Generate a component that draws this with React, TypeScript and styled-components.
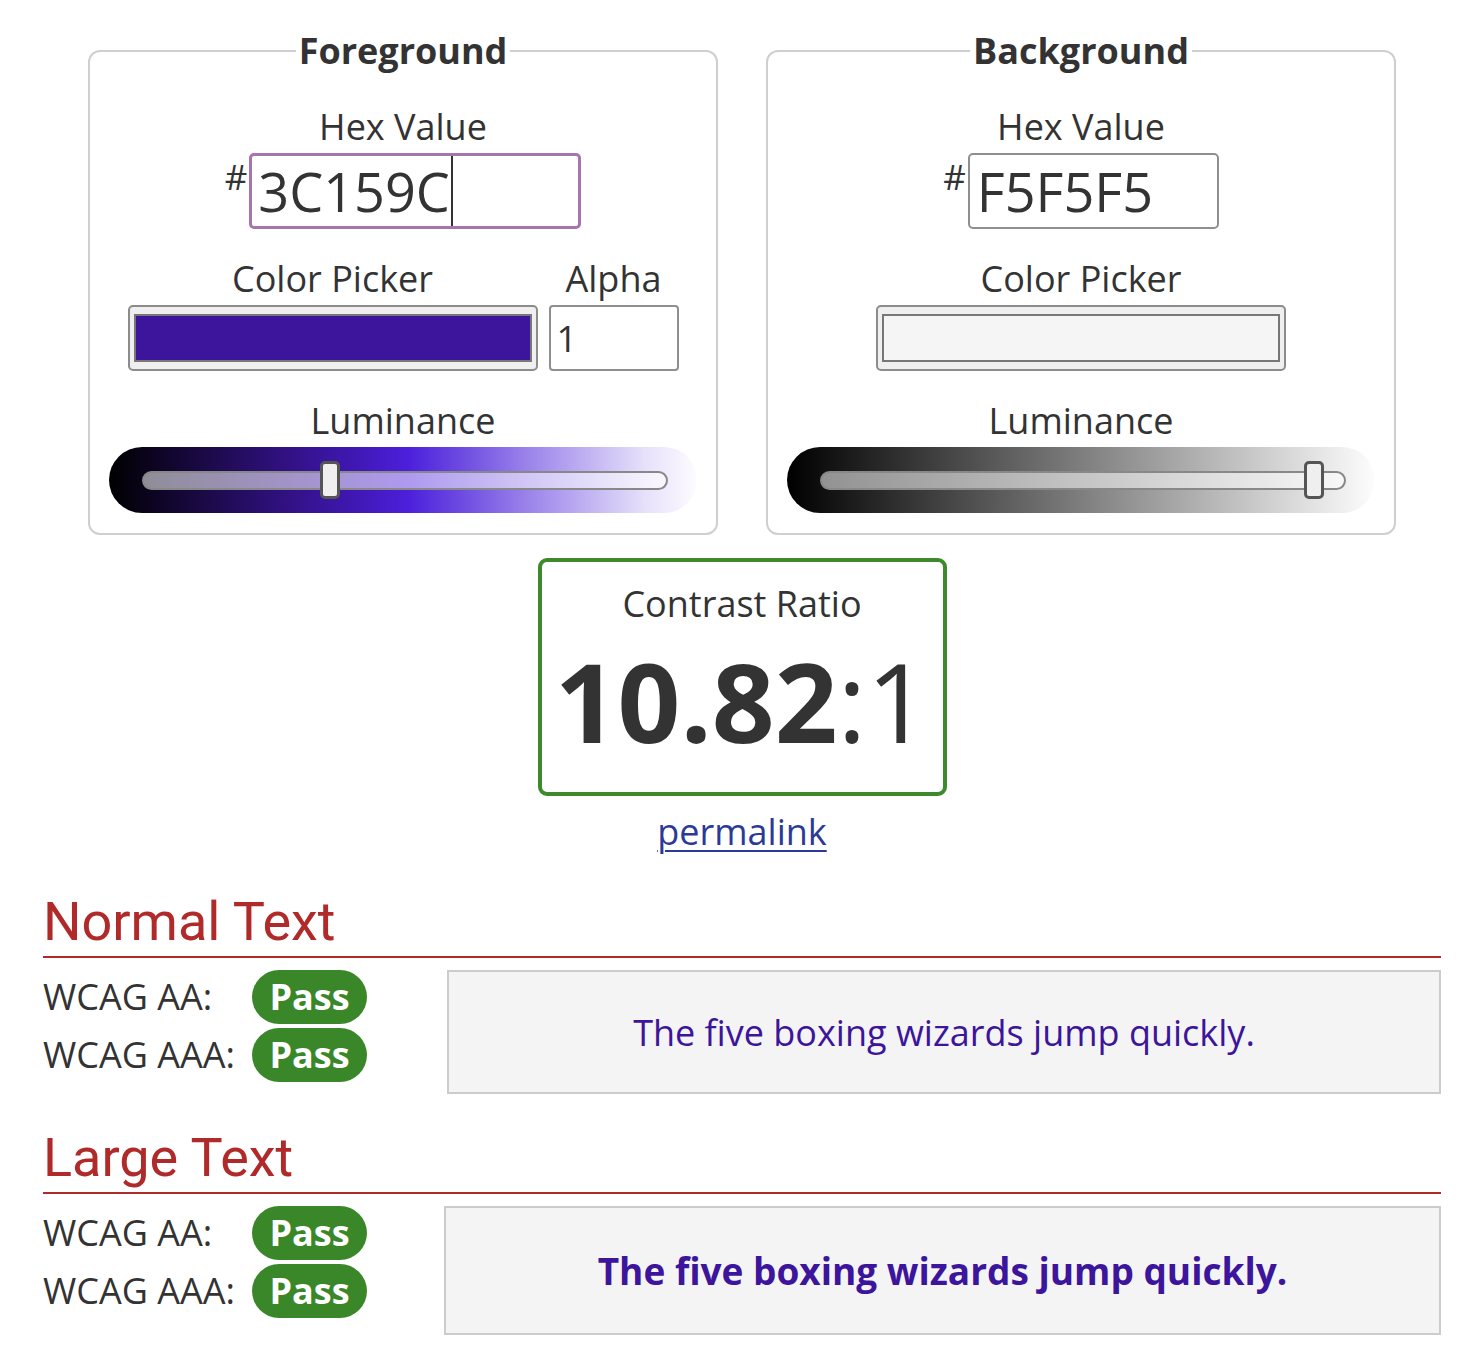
import React from "react";
import styled, { createGlobalStyle } from "styled-components";

const GlobalStyle = createGlobalStyle`
  html, body {
    margin: 0;
    padding: 0;
    background: #ffffff;
  }
  body {
    font-family: "Open Sans", "Liberation Sans", sans-serif;
    color: #333333;
  }
  * { box-sizing: border-box; }
`;

const Page = styled.main`
  width: 1398px;
  margin-left: 43px;
  padding-top: 27px;
  padding-bottom: 19px;
`;

const PanelRow = styled.div`
  display: flex;
  justify-content: center;
  gap: 48px;
`;

const Panel = styled.fieldset`
  width: 630px;
  min-width: 0;
  margin: 0;
  padding: 28px 19px 20px;
  border: 2px solid #cfcfcf;
  border-radius: 12px;
`;

const Legend = styled.legend`
  margin: 0 auto;
  padding: 0 3px;
  font-size: 36px;
  line-height: 48px;
  font-weight: 700;
  color: #333333;
`;

const Stack = styled.div`
  display: flex;
  flex-direction: column;
  align-items: center;
`;

const FieldLabel = styled.div<{ $top?: number }>`
  font-size: 36px;
  line-height: 48px;
  color: #333333;
  text-align: center;
  margin-top: ${(p) => p.$top ?? 0}px;
  margin-bottom: 2px;
`;

const HexRow = styled.div`
  display: flex;
  align-items: flex-start;
  justify-content: center;
`;

const Hash = styled.span`
  font-size: 35px;
  line-height: 48px;
  color: #333333;
  margin-right: 2px;
`;

const HexField = styled.div<{ $width: number; $focused?: boolean }>`
  width: ${(p) => p.$width}px;
  height: 76px;
  display: flex;
  align-items: center;
  padding-left: ${(p) => (p.$focused ? 6 : 7)}px;
  border: ${(p) => (p.$focused ? "3px solid #a874ae" : "2px solid #8f8f8f")};
  border-radius: 5px;
  background: #ffffff;
  font-size: 54px;
  color: #333333;
  line-height: 1;
`;

const Caret = styled.span`
  width: 2px;
  height: 70px;
  margin-left: 1px;
  background: #333333;
`;

const PickerRow = styled.div`
  display: flex;
  align-items: flex-start;
  gap: 11px;
  margin-top: 26px;
`;

const PickerColumn = styled.div`
  display: flex;
  flex-direction: column;
  align-items: center;
`;

const ColorWell = styled.div`
  width: 410px;
  height: 66px;
  padding: 7px 4px;
  border: 2px solid #8c8c8c;
  border-radius: 5px;
  background: #efefef;
`;

const Swatch = styled.div<{ $color: string }>`
  width: 100%;
  height: 100%;
  border: 2px solid #777777;
  background: ${(p) => p.$color};
`;

const AlphaField = styled.div`
  width: 130px;
  height: 66px;
  display: flex;
  align-items: center;
  padding-left: 6px;
  border: 2px solid #8f8f8f;
  border-radius: 4px;
  font-size: 36px;
  color: #333333;
`;

const SliderPill = styled.div<{ $gradient: string }>`
  width: 588px;
  height: 66px;
  border-radius: 33px;
  background: ${(p) => p.$gradient};
  display: flex;
  align-items: center;
  padding: 0 29px 0 33px;
`;

const Track = styled.div`
  position: relative;
  flex: 1;
  height: 19px;
  border: 2px solid #888888;
  border-radius: 10px;
  background: rgba(255, 255, 255, 0.55);
`;

const Thumb = styled.div`
  position: absolute;
  top: 50%;
  width: 20px;
  height: 38px;
  transform: translate(-50%, -50%);
  background: #efefef;
  border: 3px solid #555555;
  border-radius: 5px;
`;

const RatioBox = styled.div`
  width: 409px;
  margin: 23px auto 0;
  padding: 18px 0 25px;
  border: 4px solid #3d8a2c;
  border-radius: 9px;
  text-align: center;
`;

const RatioLabel = styled.div`
  font-size: 36px;
  line-height: 48px;
  color: #333333;
`;

const RatioValue = styled.div`
  margin-top: 5px;
  font-size: 110px;
  line-height: 1.22;
  color: #333333;
  font-weight: 400;
`;

const RatioStrong = styled.span`
  font-weight: 700;
`;

const PermalinkRow = styled.div`
  margin-top: 12px;
  text-align: center;
  font-size: 36px;
  line-height: 48px;
`;

const Permalink = styled.a`
  color: #2b3a98;
  text-decoration: underline;
  text-underline-offset: 5px;
  text-decoration-thickness: 2px;
`;

const Section = styled.section<{ $top: number }>`
  margin-top: ${(p) => p.$top}px;
`;

const SectionTitle = styled.h2`
  margin: 0;
  padding-bottom: 3px;
  border-bottom: 2px solid #b02a2a;
  font-family: Roboto, "Open Sans", sans-serif;
  font-weight: 400;
  font-size: 54px;
  line-height: 62px;
  color: #b02a2a;
`;

const ResultBody = styled.div`
  display: flex;
  align-items: flex-start;
  margin-top: 12px;
`;

const Checks = styled.div`
  display: flex;
  flex-direction: column;
  gap: 4px;
`;

const CheckRow = styled.div`
  display: flex;
  align-items: center;
  height: 54px;
`;

const CheckLabel = styled.span`
  width: 209px;
  font-size: 36px;
  line-height: 48px;
  color: #333333;
`;

const PassBadge = styled.span`
  width: 115px;
  height: 54px;
  border-radius: 27px;
  background: #3a8729;
  color: #ffffff;
  font-weight: 700;
  font-size: 36px;
  line-height: 54px;
  text-align: center;
`;

const SampleBox = styled.div<{ $width: number; $height: number; $bold?: boolean }>`
  width: ${(p) => p.$width}px;
  height: ${(p) => p.$height}px;
  margin-left: auto;
  display: flex;
  align-items: center;
  justify-content: center;
  border: 2px solid #cccccc;
  background: #f4f4f4;
  color: #3c159c;
  font-size: ${(p) => (p.$bold ? 37 : 36)}px;
  font-weight: ${(p) => (p.$bold ? 700 : 400)};
`;

const FG_GRADIENT =
  "linear-gradient(to right, #000000 0%, #1c0a4a 17%, #34128a 32%, #3f18b4 42%, #4c20dc 51%, #7150e2 61%, #9a82ea 71%, #c3b5f3 82%, #e6e0fa 91%, #fdfcff 100%)";
const BG_GRADIENT = "linear-gradient(to right, #000000 0%, #7e7e7e 50%, #fdfdfd 100%)";

type SliderProps = { gradient: string; value: number };

const LuminanceSlider: React.FC<SliderProps> = ({ gradient, value }) => (
  <SliderPill $gradient={gradient}>
    <Track>
      <Thumb style={{ left: `${value * 100}%` }} />
    </Track>
  </SliderPill>
);

const Checklist: React.FC = () => (
  <Checks>
    <CheckRow>
      <CheckLabel>WCAG AA:</CheckLabel>
      <PassBadge>Pass</PassBadge>
    </CheckRow>
    <CheckRow>
      <CheckLabel>WCAG AAA:</CheckLabel>
      <PassBadge>Pass</PassBadge>
    </CheckRow>
  </Checks>
);

const SAMPLE = "The five boxing wizards jump quickly.";

export default function App() {
  return (
    <>
      <GlobalStyle />
      <Page>
        <PanelRow>
          <Panel>
            <Legend>Foreground</Legend>
            <Stack>
              <FieldLabel>Hex Value</FieldLabel>
              <HexRow>
                <Hash>#</Hash>
                <HexField $width={332} $focused>
                  3C159C
                  <Caret />
                </HexField>
              </HexRow>
              <PickerRow>
                <PickerColumn>
                  <FieldLabel>Color Picker</FieldLabel>
                  <ColorWell>
                    <Swatch $color="#3c159c" />
                  </ColorWell>
                </PickerColumn>
                <PickerColumn>
                  <FieldLabel>Alpha</FieldLabel>
                  <AlphaField>1</AlphaField>
                </PickerColumn>
              </PickerRow>
              <FieldLabel $top={26}>Luminance</FieldLabel>
              <LuminanceSlider gradient={FG_GRADIENT} value={0.357} />
            </Stack>
          </Panel>
          <Panel>
            <Legend>Background</Legend>
            <Stack>
              <FieldLabel>Hex Value</FieldLabel>
              <HexRow>
                <Hash>#</Hash>
                <HexField $width={251}>F5F5F5</HexField>
              </HexRow>
              <PickerRow>
                <PickerColumn>
                  <FieldLabel>Color Picker</FieldLabel>
                  <ColorWell>
                    <Swatch $color="#f5f5f5" />
                  </ColorWell>
                </PickerColumn>
              </PickerRow>
              <FieldLabel $top={26}>Luminance</FieldLabel>
              <LuminanceSlider gradient={BG_GRADIENT} value={0.943} />
            </Stack>
          </Panel>
        </PanelRow>

        <RatioBox>
          <RatioLabel>Contrast Ratio</RatioLabel>
          <RatioValue>
            <RatioStrong>10.82</RatioStrong>:1
          </RatioValue>
        </RatioBox>
        <PermalinkRow>
          <Permalink href="#">permalink</Permalink>
        </PermalinkRow>

        <Section $top={35}>
          <SectionTitle>Normal Text</SectionTitle>
          <ResultBody>
            <Checklist />
            <SampleBox $width={994} $height={124}>
              {SAMPLE}
            </SampleBox>
          </ResultBody>
        </Section>

        <Section $top={33}>
          <SectionTitle>Large Text</SectionTitle>
          <ResultBody>
            <Checklist />
            <SampleBox $width={997} $height={129} $bold>
              {SAMPLE}
            </SampleBox>
          </ResultBody>
        </Section>
      </Page>
    </>
  );
}
